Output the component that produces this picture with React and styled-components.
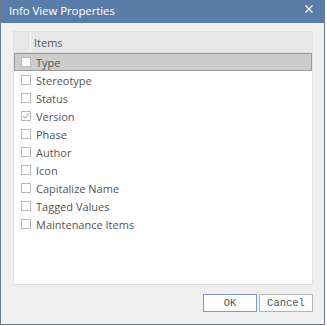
import React, { useState } from "react";
import styled, { createGlobalStyle } from "styled-components";

const items = [
  { title: "Type", checked: false },
  { title: "Stereotype", checked: false },
  { title: "Status", checked: false },
  { title: "Version", checked: true },
  { title: "Phase", checked: false },
  { title: "Author", checked: false },
  { title: "Icon", checked: false },
  { title: "Capitalize Name", checked: false },
  { title: "Tagged Values", checked: false },
  { title: "Maintenance Items", checked: false },
];

function App() {
  const [selected, setSelected] = useState(0);

  return (
    <>
      <GlobalStyle />
      <Window>
        <TitleBar>
          <Title>Info View Properties</Title>
          <CloseButton>
            <svg width="8" height="8" viewBox="0 0 8 8">
              <path d="M0.5 0.5 L7.5 7.5 M7.5 0.5 L0.5 7.5" stroke="#fff" strokeWidth="1.3" />
            </svg>
          </CloseButton>
        </TitleBar>
        <Body>
          <ListBox>
            <Header>
              <HeaderCheck />
              <HeaderLabel>Items</HeaderLabel>
            </Header>
            {items.map(({ title, checked }, i) => (
              <Row key={title} $selected={i === selected} onClick={() => setSelected(i)}>
                <Box>
                  {checked && (
                    <svg width="8" height="8" viewBox="0 0 8 8">
                      <path d="M1 4 L3 6 L7 1.5" fill="none" stroke="#8a8a8a" strokeWidth="1" />
                    </svg>
                  )}
                </Box>
                <Label>{title}</Label>
              </Row>
            ))}
          </ListBox>
        </Body>
        <Footer>
          <Button $primary>OK</Button>
          <Button>Cancel</Button>
        </Footer>
      </Window>
    </>
  );
}

export default App;

const GlobalStyle = createGlobalStyle`
  body {
    margin: 0;
    background: #ffffff;
    font-family: "Open Sans", "Noto Sans", sans-serif;
  }
`;

const Window = styled.div`
  width: 325px;
  height: 325px;
  box-sizing: border-box;
  border: 1px solid #6a7c90;
  border-top: none;
  background: #f0f0f0;
  display: flex;
  flex-direction: column;
`;

const TitleBar = styled.div`
  height: 23px;
  background: #5a7da8;
  display: flex;
  align-items: center;
  justify-content: space-between;
  padding: 0 11px 2px 8px;
  box-sizing: border-box;
`;

const Title = styled.span`
  color: #ffffff;
  font-size: 11.5px;
  letter-spacing: -0.1px;
`;

const CloseButton = styled.span`
  display: flex;
  margin-top: -4px;
`;

const Body = styled.div`
  padding: 8px 11px 0 12px;
`;

const ListBox = styled.div`
  height: 254px;
  box-sizing: border-box;
  background: #ffffff;
  border: 1px solid #e2e2e2;
`;

const Header = styled.div`
  height: 21px;
  display: flex;
  background: #e8e8e8;
  border-bottom: 1px solid #dedede;
  box-sizing: border-box;
`;

const HeaderCheck = styled.div`
  width: 16px;
  border-right: 1px solid #f6f6f6;
`;

const HeaderLabel = styled.div`
  padding-left: 3px;
  font-size: 11px;
  color: #555;
  display: flex;
  align-items: center;
`;

const Row = styled.div`
  height: 18px;
  box-sizing: border-box;
  display: flex;
  align-items: center;
  padding-left: 6px;
  background: ${(p) => (p.$selected ? "#cdcdcd" : "transparent")};
  border: 1px solid ${(p) => (p.$selected ? "#9a9a9a" : "transparent")};
`;

const Box = styled.span`
  width: 8px;
  height: 8px;
  border: 1px solid #b8b8b8;
  background: #ffffff;
  display: flex;
  align-items: center;
  justify-content: center;
`;

const Label = styled.span`
  margin-left: 5px;
  font-size: 11px;
  color: #555;
`;

const Footer = styled.div`
  display: flex;
  justify-content: flex-end;
  gap: 2px;
  padding: 9px 11px 0 0;
`;

const Button = styled.button`
  width: 54px;
  height: 18px;
  padding: 0;
  background: #fdfdfd;
  border: 1px solid ${(p) => (p.$primary ? "#7a9cc6" : "#b4b4b4")};
  font-family: "Liberation Mono", monospace;
  font-size: 10.5px;
  color: #555;
`;
